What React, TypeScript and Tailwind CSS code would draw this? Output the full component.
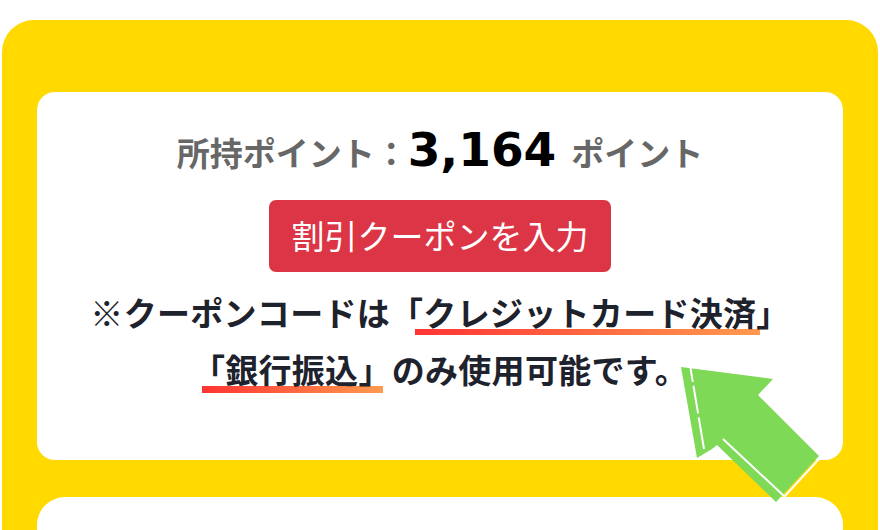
import React from "react";

const jp = "font-['Noto_Sans_CJK_JP','Noto_Sans',sans-serif]";

function Arrow() {
  return (
    <svg
      className="pointer-events-none absolute left-[670px] top-[355px] h-[160px] w-[160px]"
      viewBox="670 355 160 160"
      aria-hidden="true"
    >
      <polygon
        points="681,367 773,379 758,395 819,456 776,502 717,445 712,449 697,458"
        fill="#7ED957"
      />
      <line x1="690.5" y1="368" x2="704" y2="449" stroke="#fff" strokeWidth="2" strokeDasharray="14 4 28 4 40" />
      <line x1="723" y1="439" x2="784" y2="496" stroke="#fff" strokeWidth="2" />
      <line x1="784" y1="497" x2="819" y2="459" stroke="#fff" strokeWidth="2" />
    </svg>
  );
}

export default function App() {
  return (
    <div className="relative h-[530px] w-[880px] overflow-hidden bg-white px-[2px] pt-[20px]">
      <div className="h-[560px] rounded-[32px] bg-[#FFD900] px-[35px] pt-[72px]">
        <section className="flex h-[368px] flex-col items-center rounded-[18px] bg-white pt-[34px]">
          <div className={`flex items-baseline ${jp} font-bold text-[#676767]`}>
            <span className="text-[33px]">所持ポイント：</span>
            <span className="font-['DejaVu_Sans',sans-serif] text-[47px] leading-none text-black">3,164</span>
            <span className="ml-[15px] text-[33px]">ポイント</span>
          </div>

          <button
            type="button"
            className={`mt-[22px] flex h-[72px] w-[342px] items-center justify-center rounded-[7px] bg-[#DC3545] ${jp} text-[33px] text-white`}
          >
            割引クーポンを入力
          </button>

          <p
            className={`mt-[12px] text-center ${jp} text-[33px] font-bold leading-[57px] tracking-[0.3px] text-[#1E222C]`}
          >
            ※クーポンコードは「
            <span className="-ml-[8px] -mr-[4px] inline-block bg-[linear-gradient(90deg,#FF3434,#FF9A4E)] bg-[length:100%_6px] bg-bottom bg-no-repeat pl-[8px] pr-[4px] leading-[1.42]">
              クレジットカード決済
            </span>
            」
            <br />
            <span className="inline-block bg-[linear-gradient(90deg,#FF3434,#FF9A4E)] bg-[length:calc(100%-19px)_7px] bg-[position:10px_100%] bg-no-repeat leading-[1.44]">
              「銀行振込」
            </span>
            のみ使用可能です。
          </p>
        </section>

        <section className="mt-[37px] h-[200px] rounded-[28px] bg-white" />
      </div>
      <Arrow />
    </div>
  );
}
